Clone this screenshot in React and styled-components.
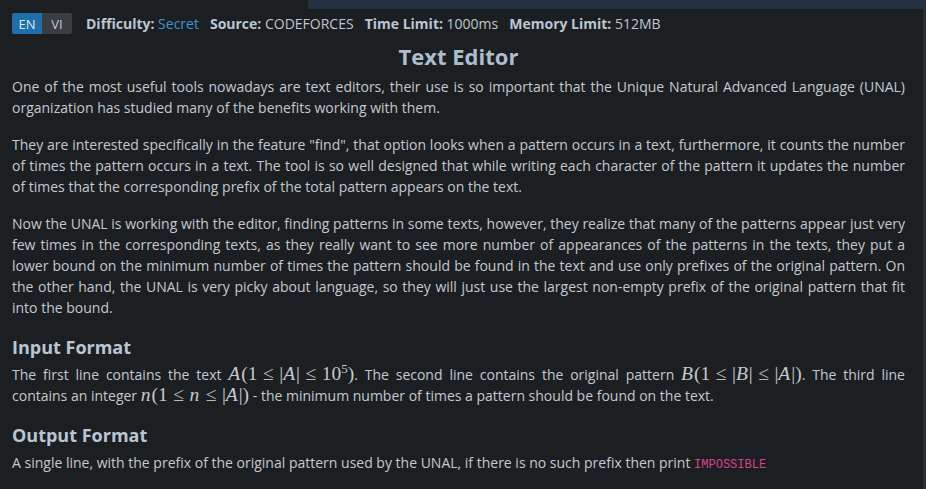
import React, { useState } from "react";
import styled, { createGlobalStyle } from "styled-components";

const GlobalStyle = createGlobalStyle`
  html, body {
    margin: 0;
    padding: 0;
    background: #1c1f22;
    overflow: hidden;
  }
  body {
    font-family: "Open Sans", "Noto Sans", sans-serif;
  }
`;

const App = () => {
  const [lang, setLang] = useState("EN");

  return (
    <>
      <GlobalStyle />
      <Page>
        <TopStrip />
        <Content>
          <MetaRow>
            <LangToggle>
              <LangButton $active={lang === "EN"} onClick={() => setLang("EN")}>
                EN
              </LangButton>
              <LangButton $active={lang === "VI"} onClick={() => setLang("VI")}>
                VI
              </LangButton>
            </LangToggle>
            <MetaItem>
              <b>Difficulty:</b> <Accent>Secret</Accent>
            </MetaItem>
            <MetaItem>
              <b>Source:</b> CODEFORCES
            </MetaItem>
            <MetaItem>
              <b>Time Limit:</b> 1000ms
            </MetaItem>
            <MetaItem>
              <b>Memory Limit:</b> 512MB
            </MetaItem>
          </MetaRow>

          <Title>Text Editor</Title>

          <Para>
            One of the most useful tools nowadays are text editors, their use is so important that the
            Unique Natural Advanced Language (UNAL) organization has studied many of the benefits working
            with them.
          </Para>
          <Para>
            They are interested specifically in the feature "find", that option looks when a pattern
            occurs in a text, furthermore, it counts the number of times the pattern occurs in a text. The
            tool is so well designed that while writing each character of the pattern it updates the number
            of times that the corresponding prefix of the total pattern appears on the text.
          </Para>
          <Para>
            Now the UNAL is working with the editor, finding patterns in some texts, however, they realize
            that many of the patterns appear just very few times in the corresponding texts, as they really
            want to see more number of appearances of the patterns in the texts, they put a lower bound on
            the minimum number of times the pattern should be found in the text and use only prefixes of the
            original pattern. On the other hand, the UNAL is very picky about language, so they will just use
            the largest non-empty prefix of the original pattern that fit into the bound.
          </Para>

          <Heading>Input Format</Heading>
          <Para>
            The first line contains the text{" "}
            <Math>
              <Var>A</Var>(1<Op>≤</Op>|<Var>A</Var>|<Op>≤</Op>10<sup>5</sup>)
            </Math>
            . The second line contains the original pattern{" "}
            <Math>
              <Var>B</Var>(1<Op>≤</Op>|<Var>B</Var>|<Op>≤</Op>|<Var>A</Var>|)
            </Math>
            . The third line contains an integer{" "}
            <Math>
              <Var>n</Var>(1<Op>≤</Op><Var>n</Var><Op>≤</Op>|<Var>A</Var>|)
            </Math>{" "}
            - the minimum number of times a pattern should be found on the text.
          </Para>

          <Heading>Output Format</Heading>
          <Para>
            A single line, with the prefix of the original pattern used by the UNAL, if there is no such
            prefix then print <Code>IMPOSSIBLE</Code>
          </Para>
        </Content>
        <ScrollTrack />
      </Page>
    </>
  );
};

const Page = styled.div`
  position: relative;
  height: 489px;
  background: #1c1f22;
  overflow: hidden;
`;

const TopStrip = styled.div`
  position: absolute;
  top: 0;
  left: 308px;
  right: 0;
  height: 9px;
  background: #233141;
  z-index: 2;
`;

const ScrollTrack = styled.div`
  position: absolute;
  top: 9px;
  right: 0;
  bottom: 0;
  width: 3px;
  background: #2b2f33;
`;

const Content = styled.div`
  padding: 13px 21px 0 12px;
`;

const MetaRow = styled.div`
  display: flex;
  align-items: center;
  gap: 11px;
  font-size: 14px;
  color: #bfc6cd;
`;

const LangToggle = styled.div`
  display: flex;
  border-radius: 2px;
  overflow: hidden;
  margin-right: 3px;
`;

const LangButton = styled.button`
  border: none;
  width: 30px;
  height: 21px;
  padding: 0;
  font-family: "Open Sans", sans-serif;
  font-size: 13px;
  color: ${(p) => (p.$active ? "#dce8f2" : "#c4c8cc")};
  background: ${(p) => (p.$active ? "#1f6fab" : "#3a3e42")};
  cursor: pointer;
`;

const MetaItem = styled.span`
  white-space: nowrap;
  b {
    color: #bac7d3;
    font-weight: 700;
  }
`;

const Accent = styled.span`
  color: #3f92d2;
`;

const Title = styled.h1`
  margin: 7px 0 5px;
  text-align: center;
  font-size: 22px;
  line-height: 30px;
  font-weight: 700;
  color: #adbdcc;
`;

const Para = styled.p`
  margin: 0 0 16px;
  font-size: 14px;
  line-height: 21px;
  color: #c3c9cf;
  text-align: justify;
`;

const Heading = styled.h2`
  margin: 16px 0 4px;
  font-size: 18px;
  line-height: 26px;
  font-weight: 700;
  color: #b9c6d2;
`;

const Math = styled.span`
  font-family: "Liberation Serif", "DejaVu Serif", serif;
  font-size: 19.5px;
  line-height: 14px;
  white-space: nowrap;
  sup {
    font-size: 13px;
    line-height: 0;
    vertical-align: 7px;
  }
`;

const Var = styled.i`
  font-style: italic;
  margin-right: 1px;
`;

const Op = styled.span`
  margin: 0 5.5px;
  color: #b3b9bf;
`;

const Code = styled.code`
  font-family: "Liberation Mono", "DejaVu Sans Mono", monospace;
  font-size: 12px;
  color: #d8428a;
`;

export default App;
